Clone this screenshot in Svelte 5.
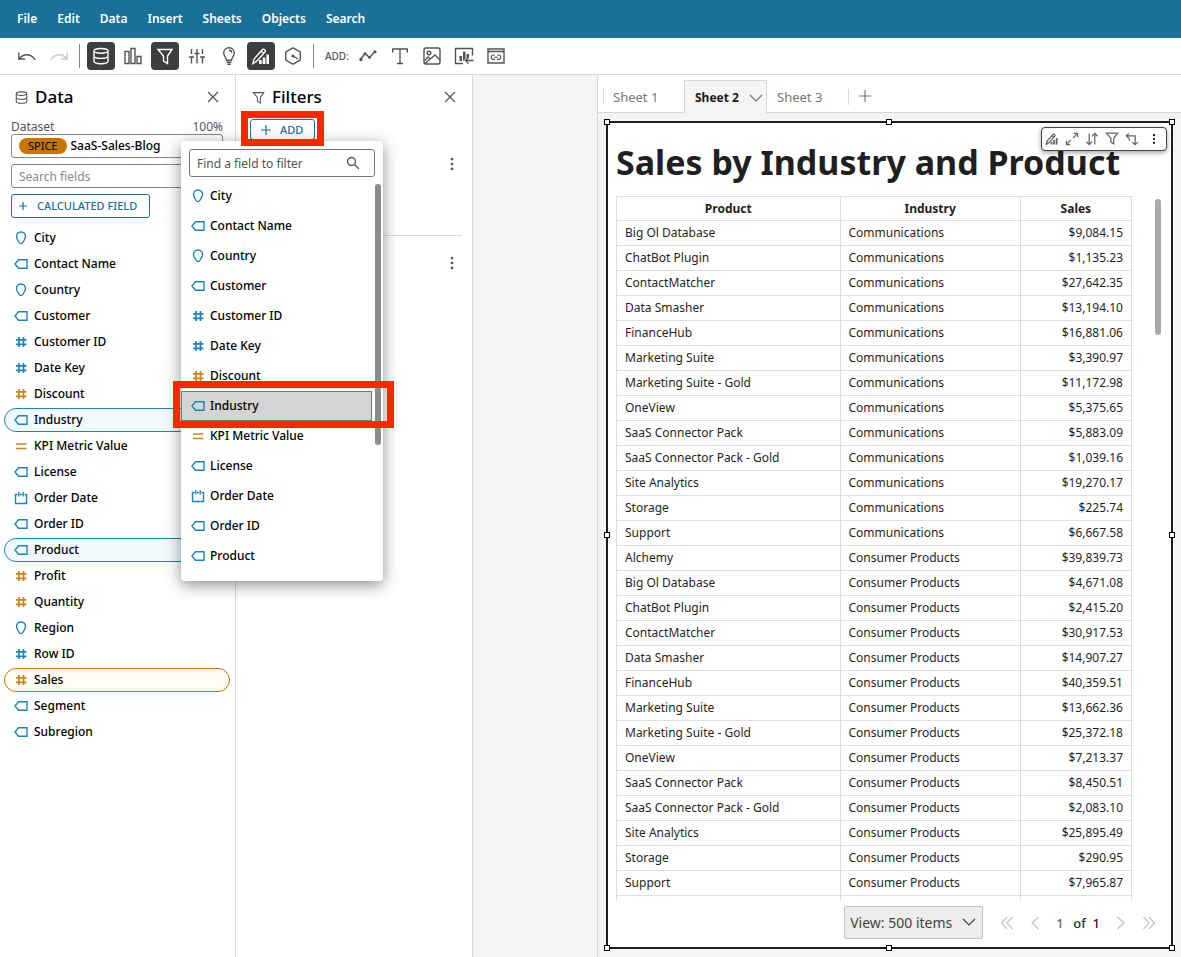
<script lang="ts">
  type FieldKind = 'pin' | 'tag' | 'hash' | 'equals' | 'calendar';
  type Field = { name: string; kind: FieldKind; measure?: boolean; used?: boolean };

  const menus = ['File', 'Edit', 'Data', 'Insert', 'Sheets', 'Objects', 'Search'];

  const fields: Field[] = [
    { name: 'City', kind: 'pin' },
    { name: 'Contact Name', kind: 'tag' },
    { name: 'Country', kind: 'pin' },
    { name: 'Customer', kind: 'tag' },
    { name: 'Customer ID', kind: 'hash' },
    { name: 'Date Key', kind: 'hash' },
    { name: 'Discount', kind: 'hash', measure: true },
    { name: 'Industry', kind: 'tag', used: true },
    { name: 'KPI Metric Value', kind: 'equals', measure: true },
    { name: 'License', kind: 'tag' },
    { name: 'Order Date', kind: 'calendar' },
    { name: 'Order ID', kind: 'tag' },
    { name: 'Product', kind: 'tag', used: true },
    { name: 'Profit', kind: 'hash', measure: true },
    { name: 'Quantity', kind: 'hash', measure: true },
    { name: 'Region', kind: 'pin' },
    { name: 'Row ID', kind: 'hash' },
    { name: 'Sales', kind: 'hash', measure: true, used: true },
    { name: 'Segment', kind: 'tag' },
    { name: 'Subregion', kind: 'tag' }
  ];

  const products = [
    'Big Ol Database',
    'ChatBot Plugin',
    'ContactMatcher',
    'Data Smasher',
    'FinanceHub',
    'Marketing Suite',
    'Marketing Suite - Gold',
    'OneView',
    'SaaS Connector Pack',
    'SaaS Connector Pack - Gold',
    'Site Analytics',
    'Storage',
    'Support'
  ];

  const communications = [
    '$9,084.15', '$1,135.23', '$27,642.35', '$13,194.10', '$16,881.06', '$3,390.97', '$11,172.98',
    '$5,375.65', '$5,883.09', '$1,039.16', '$19,270.17', '$225.74', '$6,667.58'
  ];

  const consumer = [
    '$4,671.08', '$2,415.20', '$30,917.53', '$14,907.27', '$40,359.51', '$13,662.36', '$25,372.18',
    '$7,213.37', '$8,450.51', '$2,083.10', '$25,895.49', '$290.95', '$7,965.87'
  ];

  const rows = [
    ...products.map((p, i) => [p, 'Communications', communications[i]]),
    ['Alchemy', 'Consumer Products', '$39,839.73'],
    ...products.map((p, i) => [p, 'Consumer Products', consumer[i]])
  ];

  let filterQuery = $state('');
  let fieldQuery = $state('');
  let highlighted = $state('Industry');
  let page = $state('1');

  const matches = (list: Field[], q: string) =>
    list.filter((f) => f.name.toLowerCase().includes(q.toLowerCase()));
</script>

{#snippet fieldIcon(f: Field)}
  <svg class="field-icon {f.kind}" class:measure={f.measure} viewBox="0 0 14 14" aria-hidden="true">
    {#if f.kind === 'pin'}
      <path d="M7 1C4.2 1 2.5 3 2.5 5.5 2.5 7.5 4 9.5 5.2 11.5 6 13 8 13 8.8 11.5 10 9.5 11.5 7.5 11.5 5.5 11.5 3 9.8 1 7 1z" />
    {:else if f.kind === 'tag'}
      <path d="M4.5 2.7H13v8.6H4.5L1 7z" />
    {:else if f.kind === 'hash'}
      <path d="M5 2v10M9.500 2v10M2 4.800h10.500M2 9.300h10.500" />
    {:else if f.kind === 'equals'}
      <path d="M2 5h10.500M2 9.500h10.500" />
    {:else}
      <path d="M3.500 3.500h-2v9h11v-9h-2M6 3.500h2M4.800 1v4.500M9.200 1v4.500" />
    {/if}
  </svg>
{/snippet}

{#snippet cylinder()}
  <path d="M3 4.800C3 3.300 6 2.500 10 2.500s7 .8 7 2.300S14 7.200 10 7.200 3 6.300 3 4.800zM3 4.800v10.500c0 1.500 3 2.400 7 2.400s7-.9 7-2.400V4.800M3 10c0 1.500 3 2.400 7 2.400s7-.9 7-2.400" />
{/snippet}

{#snippet funnel()}
  <path d="M3 3.500h14l-4.500 6.500v7.500l-4-2.500v-5z" />
{/snippet}

{#snippet pencilChart()}
  <path d="M2 17.500l1-4.500L11.500 3.500c1-1 3.700 1 2.700 2.200L5.500 15.500zM10 5.300l2.700 2.200" />
  <path class="solid" d="M8 14h2.700v4H8zM11.700 11.500h2.700V18h-2.700zM15.400 8.500H18V18h-2.600z" />
{/snippet}

{#snippet close()}
  <svg viewBox="0 0 20 20" aria-hidden="true"><path d="M4.500 4.500l11 11M15.500 4.500l-11 11" /></svg>
{/snippet}

{#snippet kebab()}
  <svg viewBox="0 0 20 20" aria-hidden="true">
    <g class="solid"><circle cx="10" cy="4.500" r="1.500" /><circle cx="10" cy="10" r="1.500" /><circle cx="10" cy="15.500" r="1.500" /></g>
  </svg>
{/snippet}

<div class="app">
  <nav class="menubar" aria-label="Main menu">
    {#each menus as item}
      <button type="button">{item}</button>
    {/each}
  </nav>

  <div class="toolbar" role="toolbar" aria-label="Analysis tools">
    <button type="button" aria-label="Undo">
      <svg viewBox="0 0 20 20"><path d="M1.800 6.500V13H8M2 12.800C7 7 14 7.500 18.200 13.800" /></svg>
    </button>
    <button type="button" aria-label="Redo" disabled>
      <svg viewBox="0 0 20 20"><path d="M18.200 6.500V13H12M18 12.800C13 7 6 7.500 1.800 13.800" /></svg>
    </button>
    <span class="divider"></span>
    <button type="button" class="on" aria-label="Data" aria-pressed="true">
      <svg viewBox="0 0 20 20">{@render cylinder()}</svg>
    </button>
    <button type="button" aria-label="Visuals">
      <svg viewBox="0 0 20 20"><path d="M2 5.500h4v12H2zM8 2.500h4v15H8zM14 10.500h4v7h-4z" /></svg>
    </button>
    <button type="button" class="on" aria-label="Filters" aria-pressed="true">
      <svg viewBox="0 0 20 20">{@render funnel()}</svg>
    </button>
    <button type="button" aria-label="Parameters">
      <svg viewBox="0 0 20 20"><path d="M4.500 3v5M4.500 11v6.500M2 11h5M10 3v4M10 7.500V17.500M7.500 7.500h5M15.500 3v5M15.500 11v6.500M13 11h5" /></svg>
    </button>
    <button type="button" aria-label="Insights">
      <svg viewBox="0 0 20 20"><path d="M7.500 14.200C7.500 11.500 4.700 10.500 4.700 7 4.700 3.800 7 1.800 10 1.800S15.300 3.800 15.300 7c0 3.500-2.800 4.500-2.800 7.200zM7.500 16.200h5M8.200 18.300h3.600M10 4.300c1.600 0 2.700 1 2.700 2.500" /></svg>
    </button>
    <button type="button" class="on" aria-label="Properties" aria-pressed="true">
      <svg viewBox="0 0 20 20">{@render pencilChart()}</svg>
    </button>
    <button type="button" aria-label="Actions">
      <svg viewBox="0 0 20 20"><path d="M10 1.800l7.200 4.100v8.200L10 18.200l-7.200-4.100V5.900zM10 10l5 3" /><circle class="solid" cx="10" cy="10" r="1.600" /></svg>
    </button>
    <span class="divider"></span>
    <span class="add-label">ADD:</span>
    <button type="button" aria-label="Add visual">
      <svg viewBox="0 0 20 20"><path d="M2.500 13.500L7 7.500l4.500 4L17.500 5" /><g class="solid"><circle cx="3" cy="13.500" r="1.700" /><circle cx="7" cy="7.800" r="1.500" /><circle cx="11.500" cy="11.300" r="1.500" /><circle cx="17" cy="5.700" r="1.500" /></g></svg>
    </button>
    <button type="button" aria-label="Add text">
      <svg viewBox="0 0 20 20"><path d="M2.700 6.500V3h14.600v3.500M10 3v14.500M7 17.500h6" /></svg>
    </button>
    <button type="button" aria-label="Add image">
      <svg viewBox="0 0 20 20"><rect x="2" y="2" width="16" height="16" rx="2" /><circle cx="7" cy="7" r="1.800" /><path d="M3 17.500l10-8.500 5 5M3 14.500l3-3.500 2.500 2" /></svg>
    </button>
    <button type="button" aria-label="Add reusable visual">
      <svg viewBox="0 0 20 20"><path d="M9 17.500H1.500v-15h17v7M12 14.500h7.500M14.500 11.500l-3 3 3 3" /><path class="solid" d="M5.500 10H8v5H5.500zM9 5.500h2.500V13L9 15zM12.500 8H15v3l-2.500 1.500z" /></svg>
    </button>
    <button type="button" aria-label="Add web content">
      <svg viewBox="0 0 20 20"><path d="M2 3h16v14H2zM2 5.500h16" /><path class="thin" d="M9 9H7.500a2.200 2.200 0 0 0 0 4.400H9M11 9h1.500a2.200 2.200 0 0 1 0 4.400H11M8 11.200h4" /></svg>
    </button>
  </div>

  <div class="workspace">
    <aside class="panel data-panel">
      <header>
        <svg class="head-icon" viewBox="0 0 20 20" aria-hidden="true">{@render cylinder()}</svg>
        <h2>Data</h2>
        <button type="button" class="close" aria-label="Close data pane">{@render close()}</button>
      </header>
      <div class="data-tools">
        <div class="dataset-label"><span>Dataset</span><span>100%</span></div>
        <button type="button" class="dataset"><span class="badge">SPICE</span>SaaS-Sales-Blog</button>
        <input type="search" class="field-search" placeholder="Search fields" aria-label="Search fields" bind:value={fieldQuery} />
        <button type="button" class="outline calculated">
          <svg viewBox="0 0 12 12" aria-hidden="true"><path d="M6 2v8M2 6h8" /></svg>CALCULATED FIELD
        </button>
      </div>
      <ul class="fields">
        {#each matches(fields, fieldQuery) as f (f.name)}
          <li class:used={f.used} class:measure={f.measure}>{@render fieldIcon(f)}{f.name}</li>
        {/each}
      </ul>
    </aside>

    <aside class="panel filter-panel">
      <header>
        <svg class="head-icon" viewBox="0 0 20 20" aria-hidden="true">{@render funnel()}</svg>
        <h2>Filters</h2>
        <button type="button" class="close" aria-label="Close filters pane">{@render close()}</button>
      </header>
      <div class="add-row">
        <button type="button" class="outline add">
          <svg viewBox="0 0 12 12" aria-hidden="true"><path d="M6 1v10M1 6h10" /></svg>ADD
        </button>
        <span class="callout add-callout"></span>
        <div class="menu">
          <div class="menu-search">
            <input type="text" placeholder="Find a field to filter" aria-label="Find a field to filter" bind:value={filterQuery} />
            <svg viewBox="0 0 14 14" aria-hidden="true"><circle cx="5.500" cy="5.500" r="4" /><path d="M8.500 8.500l4.500 4.500" /></svg>
          </div>
          <ul>
            {#each matches(fields, filterQuery) as f (f.name)}
              <li>
                <button type="button" class:highlighted={f.name === highlighted} onclick={() => (highlighted = f.name)}>
                  {@render fieldIcon(f)}{f.name}
                </button>
                {#if f.name === highlighted}<span class="callout item-callout"></span>{/if}
              </li>
            {/each}
          </ul>
          <span class="thumb"></span>
        </div>
      </div>
      <div class="filter-card"><button type="button" aria-label="Filter options">{@render kebab()}</button></div>
      <div class="filter-card"><button type="button" aria-label="Filter options">{@render kebab()}</button></div>
    </aside>

    <div class="gutter"></div>

    <main>
      <nav class="tabs" aria-label="Sheets">
        <button type="button" class="tab first">Sheet 1</button>
        <button type="button" class="tab active">
          Sheet 2
          <svg viewBox="0 0 14 14" aria-hidden="true"><path d="M1 4l6 6 6-6" /></svg>
        </button>
        <button type="button" class="tab last">Sheet 3</button>
        <button type="button" class="add-sheet" aria-label="Add sheet">
          <svg viewBox="0 0 14 14" aria-hidden="true"><path d="M7 1v12M1 7h12" /></svg>
        </button>
      </nav>

      <section class="canvas">
        <div class="visual">
          {#each ['nw', 'n', 'ne', 'w', 'e', 'sw', 's', 'se'] as pos}
            <span class="handle {pos}"></span>
          {/each}
          <div class="visual-tools">
            <button type="button" aria-label="Format visual"><svg viewBox="0 0 20 20">{@render pencilChart()}</svg></button>
            <button type="button" aria-label="Maximize"><svg viewBox="0 0 20 20"><path d="M11.500 8.500L18 2M12.500 2H18v5.500M8.500 11.500L2 18M2 12.500V18h5.500" /></svg></button>
            <button type="button" aria-label="Sort"><svg viewBox="0 0 20 20"><path d="M6 2v16M2 14l4 4 4-4M14 18V2M10 6l4-4 4 4" /></svg></button>
            <button type="button" aria-label="Filter"><svg viewBox="0 0 20 20"><path d="M2 1.500h16l-5.500 7.500v8l-4-2.500V9z" /></svg></button>
            <button type="button" aria-label="Swap axes"><svg viewBox="0 0 20 20"><path d="M5.500 2L2 5.500 5.500 9M2 5.500h12.500V18M10.500 14.500l4 3.500 4-3.500M6 9v3" /></svg></button>
            <button type="button" class="more" aria-label="More options">{@render kebab()}</button>
          </div>
          <h1>Sales by Industry and Product</h1>
          <div class="table-wrap">
            <table>
              <thead>
                <tr><th class="product">Product</th><th class="industry">Industry</th><th>Sales</th></tr>
              </thead>
              <tbody>
                {#each rows as [product, industry, sales]}
                  <tr><td>{product}</td><td>{industry}</td><td class="num">{sales}</td></tr>
                {/each}
                <tr><td></td><td></td><td></td></tr>
              </tbody>
            </table>
            <span class="thumb"></span>
          </div>
          <footer>
            <div class="page-size">
              <select aria-label="Items per page">
                <option>View: 500 items</option>
                <option>View: 100 items</option>
              </select>
              <svg viewBox="0 0 14 14" aria-hidden="true"><path d="M1 4l6 6 6-6" /></svg>
            </div>
            <button type="button" aria-label="First page"><svg viewBox="0 0 14 14"><path d="M7 1L1.500 7 7 13M12.500 1L7 7l5.500 6" /></svg></button>
            <button type="button" aria-label="Previous page"><svg viewBox="0 0 14 14"><path d="M10.500 1L4 7l6.500 6" /></svg></button>
            <div class="page-no">
              <input type="text" aria-label="Page" bind:value={page} />
              <span>of&nbsp; 1</span>
            </div>
            <button type="button" aria-label="Next page"><svg viewBox="0 0 14 14"><path d="M3.500 1L10 7l-6.500 6" /></svg></button>
            <button type="button" aria-label="Last page"><svg viewBox="0 0 14 14"><path d="M1.500 1L7 7l-5.500 6M7 1l5.500 6L7 13" /></svg></button>
          </footer>
        </div>
      </section>
    </main>
  </div>
</div>

<style>
  :global(body) {
    background: #fff;
  }

  .app {
    display: flex;
    flex-direction: column;
    height: 100vh;
    overflow: hidden;
    color: #000;
    font: 500 12px/16px 'Noto Sans', 'Open Sans', sans-serif;
  }

  .app :global(*) {
    box-sizing: border-box;
  }

  button,
  input,
  select {
    margin: 0;
    padding: 0;
    border: none;
    background: transparent;
    color: inherit;
    font: inherit;
  }

  button {
    cursor: pointer;
  }

  ul {
    margin: 0;
    padding: 0;
    list-style: none;
  }

  svg {
    display: block;
    flex: none;
    fill: none;
    stroke: currentColor;
    stroke-width: 1.4;
  }

  .solid {
    fill: currentColor;
    stroke: none;
  }

  .thin {
    stroke-width: 1.1;
  }

  .menubar {
    display: flex;
    flex: none;
    gap: 20px;
    height: 38px;
    padding: 0 17px;
    background: #19719a;
    color: #fff;
    font-weight: 600;
  }

  .toolbar {
    display: flex;
    flex: none;
    align-items: center;
    gap: 4px;
    height: 37px;
    padding: 0 13px;
    border-bottom: 1px solid #d9d9d9;
    color: #545454;
  }

  .toolbar button {
    display: grid;
    place-items: center;
    width: 28px;
    height: 28px;
    border-radius: 4px;
  }

  .toolbar button svg {
    width: 20px;
    height: 20px;
  }

  .toolbar button:disabled {
    color: #c8c8c8;
  }

  .toolbar button.on {
    background: #3d3d3d;
    color: #fff;
  }

  .divider {
    width: 1px;
    height: 24px;
    margin: 0 3px 0 2px;
    background: #888;
  }

  .add-label {
    width: 29px;
    padding-left: 4px;
    font-size: 10px;
  }

  .workspace {
    display: flex;
    flex: 1;
    min-height: 0;
  }

  .panel {
    flex: none;
    border-right: 1px solid #d9d9d9;
  }

  .panel header {
    display: flex;
    align-items: center;
    gap: 6px;
    height: 44px;
    padding: 0 13px 0 14px;
  }

  .filter-panel header {
    padding-left: 15px;
  }

  h2 {
    flex: 1;
    margin: 0;
    font-size: 17px;
    font-weight: 500;
  }

  .head-icon {
    width: 15px;
    height: 15px;
    color: #545454;
  }

  .close {
    color: #545454;
  }

  .close svg {
    width: 18px;
    height: 18px;
  }

  .data-panel {
    width: 236px;
  }

  .data-tools {
    display: flex;
    flex-direction: column;
    align-items: stretch;
    padding: 0 12px 6px 11px;
  }

  .dataset-label {
    display: flex;
    justify-content: space-between;
    height: 15px;
    color: #545454;
    font-weight: 400;
    line-height: 15px;
  }

  .dataset,
  .field-search {
    height: 24px;
    margin-bottom: 6px;
    border: 1px solid #888;
    border-radius: 3px;
  }

  .dataset {
    display: flex;
    align-items: center;
    gap: 4px;
    padding: 0 7px;
  }

  .badge {
    padding: 0 9px;
    border-radius: 8px;
    background: #c87400;
    font-size: 11px;
    font-weight: 400;
  }

  .field-search {
    padding: 0 7px;
    font-weight: 400;
  }

  .field-search::placeholder {
    color: #888;
  }

  .outline {
    display: flex;
    align-items: center;
    border: 1px solid #19719a;
    border-radius: 3px;
    background: #fff;
    color: #19719a;
    font-size: 11px;
  }

  .outline svg {
    width: 12px;
    height: 12px;
    stroke-width: 1.2;
  }

  .calculated {
    align-self: flex-start;
    gap: 8px;
    height: 24px;
    padding: 0 12px 0 5px;
  }

  .fields {
    padding: 0 5px 0 4px;
  }

  .fields li {
    display: flex;
    align-items: center;
    gap: 6px;
    height: 24px;
    margin: 2px 0;
    padding: 0 9px;
    border: 1px solid transparent;
    border-radius: 12px;
  }

  .fields li.used {
    border-color: #1b84bf;
    background: #f3fafe;
  }

  .fields li.used.measure {
    border-color: #c87400;
    background: #fffbf5;
  }

  .field-icon {
    width: 14px;
    height: 14px;
    color: #1b84bf;
  }

  .field-icon.measure {
    color: #cf8019;
  }

  .field-icon.hash,
  .field-icon.equals {
    stroke-width: 1.7;
  }

  .filter-panel {
    width: 237px;
  }

  .add-row {
    position: relative;
    height: 18px;
    padding-left: 14px;
  }

  .add {
    gap: 8px;
    height: 21px;
    padding: 0 11px 0 9px;
  }

  .callout {
    position: absolute;
    border: 7px solid #ff2600;
    pointer-events: none;
  }

  .add-callout {
    z-index: 3;
    top: -8px;
    left: 5px;
    width: 83px;
    height: 35px;
  }

  .menu {
    position: absolute;
    z-index: 2;
    top: 22px;
    left: -55px;
    width: 202px;
    height: 440px;
    padding-top: 8px;
    border-radius: 4px;
    background: #fff;
    box-shadow: 0 4px 16px rgba(0, 0, 0, 0.45);
  }

  .menu-search {
    position: relative;
    margin: 0 8px 4px;
  }

  .menu-search input {
    display: block;
    width: 100%;
    height: 28px;
    padding: 0 32px 0 7px;
    border: 1px solid #777;
    border-radius: 3px;
    font-weight: 400;
  }

  .menu-search input::placeholder {
    color: #545454;
  }

  .menu-search svg {
    position: absolute;
    top: 7px;
    right: 15px;
    width: 14px;
    height: 14px;
    color: #545454;
    stroke-width: 1.3;
  }

  .menu ul {
    height: 398px;
    padding-right: 11px;
    overflow-y: auto;
    scrollbar-width: none;
  }

  .menu li button {
    display: flex;
    align-items: center;
    gap: 5px;
    width: 100%;
    height: 30px;
    padding: 0 9px;
    border: 1px solid transparent;
    text-align: left;
  }

  .menu li button.highlighted {
    border-color: #777;
    background: #d4d4d4;
  }

  .item-callout {
    z-index: 3;
    top: 240px;
    left: -8px;
    width: 221px;
    height: 47px;
  }

  .thumb {
    position: absolute;
    border-radius: 3px;
  }

  .menu .thumb {
    top: 43px;
    right: 2px;
    width: 6px;
    height: 261px;
    background: #8c8c8c;
  }

  .filter-card {
    display: flex;
    justify-content: flex-end;
    align-items: flex-start;
    height: 98px;
    margin: 0 10px;
    padding-top: 18px;
    color: #545454;
  }

  .filter-card + .filter-card {
    border-top: 1px solid #d9d9d9;
  }

  .filter-card svg {
    width: 20px;
    height: 18px;
  }

  .gutter {
    width: 125px;
    border-right: 1px solid #d9d9d9;
    background: #f5f5f5;
  }

  main {
    display: flex;
    flex: 1;
    flex-direction: column;
    min-width: 0;
  }

  .tabs {
    display: flex;
    flex: none;
    align-items: flex-end;
    height: 38px;
    padding-left: 5px;
    border-bottom: 1px solid #d9d9d9;
    color: #777;
    font-size: 13px;
  }

  .tab {
    height: 16px;
    margin-bottom: 7px;
    padding: 0 9px;
    border-left: 1px solid #d9d9d9;
    font-weight: 400;
    text-align: left;
  }

  .tab.first {
    width: 81px;
  }

  .tab.last {
    width: 82px;
    padding-left: 10px;
    border-right: 1px solid #d9d9d9;
    border-left: none;
  }

  .tab.active {
    display: flex;
    align-items: center;
    justify-content: space-between;
    width: 83px;
    height: 33px;
    margin-bottom: -1px;
    padding: 2px 3px 0 10px;
    border: 1px solid #d9d9d9;
    border-bottom: none;
    background: #f5f5f5;
    color: #16191f;
    font-size: 12px;
    font-weight: 700;
  }

  .tabs svg {
    width: 14px;
    height: 14px;
    color: #777;
    stroke-width: 1.2;
  }

  .add-sheet {
    margin: 0 0 9px 9px;
  }

  .canvas {
    flex: 1;
    min-height: 0;
    padding: 8px;
    background: #f5f5f5;
  }

  .visual {
    position: relative;
    display: flex;
    flex-direction: column;
    height: 100%;
    border: 2px solid #1f1f1f;
    background: #fff;
    color: #1f1f1f;
  }

  .handle {
    position: absolute;
    width: 6px;
    height: 6px;
    border: 1px solid #000;
    background: #fff;
  }

  .nw,
  .n,
  .ne {
    top: -4px;
  }

  .w,
  .e {
    top: calc(50% - 3px);
  }

  .sw,
  .s,
  .se {
    bottom: -4px;
  }

  .nw,
  .w,
  .sw {
    left: -4px;
  }

  .n,
  .s {
    left: calc(50% - 4px);
  }

  .ne,
  .e,
  .se {
    right: -4px;
  }

  .visual-tools {
    position: absolute;
    top: 4px;
    right: 4px;
    display: flex;
    align-items: center;
    gap: 6px;
    height: 24px;
    padding: 0 5px 0 3px;
    border: 1px solid #444;
    border-radius: 4px;
    background: #fff;
    box-shadow: 0 2px 5px rgba(0, 0, 0, 0.35);
    color: #666;
  }

  .visual-tools svg {
    width: 14px;
    height: 14px;
    stroke-width: 1.8;
  }

  .visual-tools .more {
    margin-left: 2px;
    color: #000;
  }

  h1 {
    margin: 15px 8px 10px;
    font-size: 34px;
    font-weight: 700;
    line-height: 48px;
    white-space: nowrap;
  }

  .table-wrap {
    position: relative;
    flex: 1;
    min-height: 0;
    margin: 0 39px 0 8px;
    clip-path: inset(0 -32px 0 0);
  }

  .table-wrap .thumb {
    top: 3px;
    right: -29px;
    width: 6px;
    height: 136px;
    background: #a9a9a9;
  }

  table {
    width: 100%;
    border-collapse: collapse;
    table-layout: fixed;
  }

  th,
  td {
    height: 25px;
    padding: 0 8px;
    border: 1px solid #dedede;
    font-weight: 400;
    text-align: left;
    white-space: nowrap;
  }

  th {
    height: 24px;
    font-weight: 700;
    text-align: center;
  }

  .product {
    width: 43.4%;
  }

  .industry {
    width: 35%;
  }

  .num {
    text-align: right;
  }

  footer {
    display: flex;
    flex: none;
    align-items: center;
    justify-content: flex-end;
    gap: 14px;
    height: 46px;
    padding: 0 15px 3px 0;
    font-size: 13px;
  }

  footer button {
    color: #c2c2c2;
  }

  footer svg {
    width: 14px;
    height: 14px;
    stroke-width: 1.2;
  }

  .page-size {
    position: relative;
    margin-right: 3px;
    color: #444;
  }

  .page-size select {
    width: 139px;
    height: 33px;
    padding: 0 24px 0 5px;
    border: 1px solid #c2c2c2;
    border-radius: 2px;
    appearance: none;
    background: #ededed;
    font-size: 14px;
    font-weight: 400;
  }

  .page-size svg {
    position: absolute;
    top: 9px;
    right: 7px;
    pointer-events: none;
  }

  .page-no {
    display: flex;
    gap: 8px;
  }

  .page-no input {
    width: 9px;
    color: #666;
  }
</style>
